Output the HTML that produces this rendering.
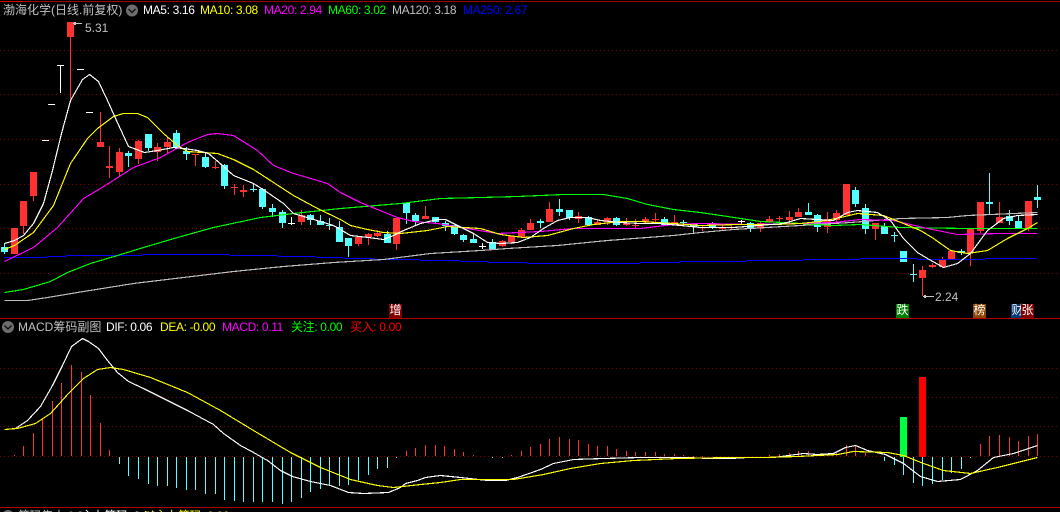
<!DOCTYPE html>
<html><head><meta charset="utf-8"><style>
html,body{margin:0;padding:0;background:#000;width:1060px;height:512px;overflow:hidden}
#w{position:relative;width:1060px;height:512px;overflow:hidden;background:#000;font:12px/14px "Liberation Sans","Noto Sans CJK SC",sans-serif}
#w span{position:absolute;white-space:pre}
#w span.t{letter-spacing:-.35px}
.lb{width:13px;height:14px;color:#fff;text-align:center;font-size:12px;line-height:13px}
svg{position:absolute;left:0;top:0}
</style></head><body><div id="w">
<svg width="1060" height="512" viewBox="0 0 1060 512" fill="none" shape-rendering="crispEdges">
<g stroke="#800000" stroke-dasharray="1 3">
<path d="M0 50.5H1060M0 94.5H1060M0 139.5H1060M0 184.5H1060M0 228.5H1060M0 273.5H1060M0 368.5H1060M0 397.5H1060M0 426.5H1060M0 456.5H1060"/>
</g>
<path stroke="#a00000" d="M0 1.5H1060"/>
<path stroke="#e00000" d="M0 1.5H23"/>
<path stroke="#b00000" d="M0 318.5H1060M0 507.5H1060"/>

<!-- red candles -->
<path stroke="#ff3232" d="M23.5 226V234M33.5 196V201M70.5 37V103M100.5 112V142M109.5 146V178M119.5 148V176M138.5 140V164M157.5 143V161M167.5 137V153M195.5 154V166M215.5 161V169M234.5 184V195M243.5 185V197M301.5 210V225M358.5 244V246M368.5 233V245M377.5 230V237M396.5 244V250M425.5 206V216M502.5 240V247M511.5 242V244M521.5 228V230M530.5 219V223M549.5 202V209M578.5 212V223M597.5 219V222M607.5 217V225M626.5 218V226M635.5 219V228M645.5 217V223M655.5 213V224M674.5 215V225M702.5 225V231M722.5 225V230M731.5 225V230M760.5 222V232M769.5 216V223M779.5 216V222M789.5 211V224M798.5 208V212M827.5 212V233M836.5 210V223M875.5 229V240M922.5 266V296M932.5 263V268M942.5 257V268M970.5 253V266M980.5 231V233M999.5 202V217M1028.5 228V231"/>
<path fill="#ff3232" d="M11 228h7v26h-7zM20 201h7v25h-7zM30 172h7v24h-7zM67 22h7v15h-7zM97 142h7v5h-7zM106 166h7v2h-7zM116 152h7v20h-7zM135 141h7v18h-7zM154 147h7v5h-7zM164 142h7v5h-7zM192 154h7v1h-7zM212 167h7v1h-7zM231 187h7v1h-7zM240 190h7v2h-7zM298 215h7v7h-7zM355 237h7v7h-7zM365 234h7v3h-7zM374 233h7v3h-7zM393 218h7v26h-7zM422 216h7v3h-7zM499 241h7v5h-7zM508 236h7v6h-7zM518 230h7v7h-7zM527 223h7v7h-7zM546 209h7v13h-7zM575 216h7v3h-7zM594 222h7v3h-7zM604 218h7v4h-7zM623 223h7v2h-7zM632 225h7v1h-7zM642 219h7v3h-7zM652 219h7v1h-7zM671 222h7v2h-7zM699 225h7v1h-7zM719 227h7v2h-7zM728 227h7v1h-7zM757 223h7v5h-7zM766 219h7v3h-7zM776 218h7v1h-7zM786 217h7v3h-7zM795 212h7v5h-7zM824 219h7v8h-7zM833 213h7v7h-7zM843 184h7v31h-7zM872 223h7v6h-7zM919 270h7v8h-7zM929 265h7v2h-7zM939 260h7v7h-7zM948 251h7v8h-7zM967 229h7v24h-7zM977 202h7v29h-7zM996 217h7v6h-7zM1025 201h7v27h-7z"/>

<!-- cyan candles -->
<path stroke="#54ffff" d="M4.500 243V254M128.500 151V167M148.500 148V151M176.500 130V133M186.500 147V160M205.500 153V168M224.500 164V189M253.500 183V192M262.500 188V209M272.500 204V217M282.500 210V228M310.500 214V225M320.500 215V221M329.500 218V230M339.500 221V227M348.500 246V257M387.500 231V234M406.500 213V224M415.500 213V226M435.500 222V223M445.500 221V231M454.500 234V235M463.500 234V242M473.500 233V239M492.500 239V242M540.500 219V228M559.500 199V216M569.500 218V220M588.500 216V226M616.500 217V226M664.500 217V226M683.500 220V226M693.500 227V233M712.500 222V229M750.500 222V232M808.500 203V212M817.500 214V232M855.500 187V207M865.500 204V234M884.500 223V226M894.500 232V242M913.500 264V282M961.500 249V255M989.500 173V215M1009.500 210V225M1018.500 216V221M1037.500 185V208"/>
<path fill="#54ffff" d="M1 247h7v5h-7zM125 153h7v3h-7zM145 134h7v14h-7zM173 133h7v15h-7zM183 151h7v3h-7zM202 157h7v10h-7zM221 165h7v21h-7zM250 189h7v1h-7zM259 189h7v18h-7zM269 208h7v4h-7zM279 212h7v11h-7zM307 215h7v5h-7zM317 221h7v4h-7zM326 225h7v1h-7zM336 227h7v15h-7zM345 238h7v8h-7zM384 234h7v9h-7zM403 203h7v10h-7zM412 215h7v6h-7zM432 217h7v5h-7zM442 223h7v3h-7zM451 225h7v9h-7zM460 235h7v5h-7zM470 239h7v4h-7zM489 242h7v7h-7zM537 221h7v2h-7zM556 209h7v3h-7zM566 210h7v8h-7zM585 217h7v8h-7zM613 218h7v7h-7zM661 219h7v6h-7zM680 222h7v1h-7zM690 224h7v3h-7zM709 223h7v5h-7zM747 223h7v5h-7zM805 212h7v3h-7zM814 215h7v12h-7zM852 190h7v14h-7zM862 208h7v21h-7zM881 226h7v8h-7zM891 235h7v1h-7zM900 251h7v11h-7zM910 274h7v1h-7zM958 251h7v2h-7zM986 202h7v2h-7zM1006 216h7v5h-7zM1015 221h7v7h-7zM1034 197h7v3h-7z"/>
<path stroke="#fff" d="M42 140.500h7M48 104.500h7M57 65.500h7M60.500 65V93M77 69.500h7M86 112.500h7M291.500 217V225M288 223.500h7M482.500 243V249M479 246.500h7"/>
<path stroke="#fff" d="M741.500 220V225M738 221.500h7"/>

<!-- MA lines -->
<path stroke="#0000ff" d="M4 257.500H47M47 256.500H66M66 255.500H143M143 254.500H230M230 255.500H278M278 256.500H316M316 257.500H343M343 258.500H375M375 259.500H420M420 260.500H460M460 261.500H488M488 262.500H527M527 263.500H640M640 262.500H680M680 261.500H746M746 260.500H803M803 259.500H860M860 258.500H918M918 259.500H985M985 258.500H1037"/>
<g stroke-width="1.15" transform="translate(.5 .5)">
<polyline stroke="#c0c0c0" points="4,300 27,300 47,297 83,291 133,283 183,277 233,271 283,266 333,262 383,259 430,253 480,250 507,248 557,245 607,240 673,235 700,232 733,229 783,226 850,222 900,218 947,217 967,215 1037,212"/>
<polyline stroke="#00ff00" points="4,292 23,289 50,281 67,272 90,263 117,255 143,247 177,237 213,227 260,217 293,213 340,208 400,203 440,198 480,197 517,196 563,194 603,194 627,198 647,204 673,209 700,212 727,216 760,221 783,222 833,225 860,224 900,227 967,228 1037,228"/>
<polyline stroke="#ff00ff" points="4,261 33,247 57,227 83,198 100,188 133,167 160,157 187,142 207,134 217,133 233,135 257,150 273,165 293,173 307,177 327,183 340,192 360,202 377,209 397,217 413,221 437,223 467,228 497,233 540,231 573,228 593,228 640,228 673,224 700,223 750,224 800,223 833,222 860,219 893,220 927,228 957,234 1000,233 1037,233"/>
<polyline stroke="#ffff00" points="4,249 14,245 33,232 53,205 70,163 87,138 97,128 113,116 123,113 137,113 147,117 163,133 177,145 187,151 217,153 233,159 253,169 273,182 293,195 317,208 340,219 350,225 367,229 383,232 400,233 427,230 447,226 480,228 500,234 523,237 547,235 573,228 593,224 620,221 640,221 673,223 700,225 737,224 773,224 800,223 820,221 840,217 857,213 883,215 903,223 920,230 933,238 950,250 967,253 987,250 1007,238 1027,228 1037,222"/>
<polyline stroke="#fff" points="4,243 14,240 23,235 33,223 43,203 52,170 61,133 70,100 82,79 89,74 98,81 107,100 116,120 128,146 144,152 157,150 173,147 183,148 197,150 208,153 222,165 233,175 253,183 267,192 283,203 293,213 310,218 333,225 350,235 368,237 383,239 393,235 403,230 420,223 437,219 445,219 457,225 473,233 487,242 500,243 517,242 530,237 543,228 557,220 570,217 587,217 600,220 620,222 640,223 660,223 700,227 733,227 783,223 800,218 833,220 847,212 857,210 877,212 890,220 903,238 917,252 927,258 943,267 957,263 970,253 987,230 1003,218 1017,215 1037,214"/>
</g>

<!-- high / low markers -->
<path stroke="#c8c8c8" d="M73 23.500h9M74 22.500h2M74 24.500h2"/>
<path stroke="#c8c8c8" d="M923 296.500h11M924 295.500h2M924 297.500h2"/>

<!-- MACD histogram -->
<path stroke="#ff3232" d="M14.500 455V456M23.500 446V456M33.500 433V456M42.500 418V456M52.500 401V456M61.500 383V456M71.500 365V456M81.500 372V456M90.500 395V456M100.500 423V456M109.500 450V456M406.500 451V456M415.500 448V456M425.500 445V456M435.500 445V456M444.500 446V456M454.500 449V456M463.500 452V456M473.500 455V456M511.500 455V456M521.500 451V456M530.500 447V456M540.500 444V456M549.500 439V456M559.500 437V456M569.500 439V456M578.500 440V456M588.500 444V456M597.500 446V456M607.500 446V456M616.500 449V456M626.500 451V456M635.500 452V456M645.500 452V456M655.500 452V456M664.500 454V456M674.500 454V456M683.500 455V456M693.500 456V457M702.500 456V457M769.500 455V456M779.500 454V456M789.500 453V456M798.500 451V456M808.500 451V456M817.500 455V456M827.500 454V456M836.500 453V456M846.500 445V456M855.500 445V456M865.500 453V456M980.500 444V456M989.500 436V456M999.500 435V456M1009.500 437V456M1018.500 441V456M1028.500 436V456M1037.500 434V456"/>
<path stroke="#54ffff" d="M119.500 457V464M128.500 457V476M138.500 457V479M148.500 457V484M157.500 457V486M167.500 457V486M176.500 457V488M186.500 457V490M195.500 457V490M205.500 457V494M215.500 457V494M224.500 457V500M234.500 457V501M243.500 457V502M253.500 457V502M262.500 457V502M272.500 457V502M282.500 457V504M291.500 457V502M301.500 457V498M310.500 457V492M320.500 457V489M329.500 457V485M339.500 457V486M348.500 457V485M358.500 457V480M368.500 457V475M377.500 457V469M387.500 457V468M396.500 457V458M492.500 457V458M502.500 457V458M884.500 457V461M894.500 457V465M903.500 457V475M913.500 457V483M922.500 457V486M932.500 457V484M942.500 457V480M951.500 457V473M961.500 457V469M970.500 457V458"/>
<path fill="#00ff40" d="M900 417h7v40h-7z"/>
<path fill="#ff0000" d="M919 377h7v80h-7z"/>

<!-- MACD lines -->
<g stroke-width="1.15" transform="translate(.5 .5)">
<polyline stroke="#fff" points="4,429 15,428 27,420 40,406 52,385 62,365 71,346 82,338 88,341 98,348 107,360 117,372 128,381 143,388 167,400 187,410 213,424 223,433 240,445 253,452 267,460 280,470 292,476 310,481 330,485 348,492 363,493 388,492 400,487 405,483 417,480 425,477 440,475 460,477 478,479 488,480 505,480 517,477 540,469 553,463 573,459 603,458 640,457 660,457 687,457 708,458 730,458 747,457 773,457 803,453 817,454 833,453 845,447 855,445 867,450 885,454 903,463 920,476 937,481 960,479 977,470 993,457 1013,453 1037,445"/>
<polyline stroke="#ffff00" points="4,429 17,428 35,423 50,413 68,393 83,378 97,369 110,367 123,369 150,377 187,392 220,410 253,430 290,452 320,467 350,479 377,485 393,487 420,484 440,482 460,479 513,479 543,474 570,468 600,463 633,460 677,458 730,457 763,457 797,456 837,454 853,451 887,452 903,455 923,463 943,470 970,473 997,467 1017,462 1037,457"/>
</g>

<!-- dropdown icons -->
<g shape-rendering="auto">
<circle cx="132" cy="10.500" r="6" fill="#6e6e6e"/><path d="M128.500 9l3.500 3.500L135.500 9" stroke="#111" stroke-width="1.4"/>
<circle cx="8" cy="327" r="6" fill="#6e6e6e"/><path d="M4.500 325.500l3.500 3.500 3.500-3.500" stroke="#111" stroke-width="1.400"/>
<circle cx="8" cy="516" r="6" fill="#6e6e6e"/>
</g>
</svg>

<span style="left:3px;top:3px;color:#c0c0c0">渤海化学(日线.前复权)</span>
<span class="t" style="left:143px;top:3px;color:#fff">MA5: 3.16</span>
<span class="t" style="left:200px;top:3px;color:#ff0">MA10: 3.08</span>
<span class="t" style="left:264px;top:3px;color:#f0f">MA20: 2.94</span>
<span class="t" style="left:328px;top:3px;color:#0f0">MA60: 3.02</span>
<span class="t" style="left:392px;top:3px;color:#c0c0c0">MA120: 3.18</span>
<span class="t" style="left:463px;top:3px;color:#00f">MA250: 2.67</span>
<span style="left:85px;top:21px;color:#c0c0c0">5.31</span>
<span style="left:935px;top:290px;color:#c0c0c0">2.24</span>

<span class="lb" style="left:389px;top:304px;background:#800000">增</span>
<span class="lb" style="left:896px;top:304px;background:#008000">跌</span>
<span class="lb" style="left:973px;top:304px;background:#8b4500">榜</span>
<span class="lb" style="left:1011px;top:304px;background:#003870">财</span>
<span class="lb" style="left:1021px;top:304px;background:#800000">张</span>

<span style="left:18px;top:320px;color:#c0c0c0">MACD筹码副图</span>
<span class="t" style="left:106px;top:320px;color:#fff">DIF: 0.06</span>
<span class="t" style="left:160px;top:320px;color:#ff0">DEA: -0.00</span>
<span class="t" style="left:222px;top:320px;color:#f0f">MACD: 0.11</span>
<span class="t" style="left:291px;top:320px;color:#0f0">关注: 0.00</span>
<span class="t" style="left:350px;top:320px;color:#f00">买入: 0.00</span>

<span class="t" style="left:18px;top:509px;color:#c0c0c0">筹码集中 0.24</span>
<span class="t" style="left:81px;top:509px;color:#fff">主力筹码: 0.16</span>
<span class="t" style="left:143px;top:509px;color:#ff0">以主力筹码: 0.00</span>
</div></body></html>
